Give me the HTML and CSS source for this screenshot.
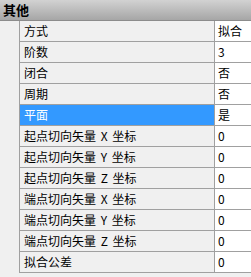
FILE: index.html
```html
<!DOCTYPE html>
<html lang="zh-CN">
  <head>
    <meta charset="UTF-8" />
    <title>其他</title>
    <link rel="stylesheet" href="styles.css">
  </head>
  <body>
    <div class="panel">
      <div class="header">其他</div>
      <div class="list">
        <div class="row"><div class="label">方式</div><div class="value">拟合</div></div>
        <div class="row"><div class="label">阶数</div><div class="value">3</div></div>
        <div class="row"><div class="label">闭合</div><div class="value">否</div></div>
        <div class="row"><div class="label">周期</div><div class="value">否</div></div>
        <div class="row selected"><div class="label">平面</div><div class="value">是</div></div>
        <div class="row"><div class="label">起点切向矢量 X 坐标</div><div class="value">0</div></div>
        <div class="row"><div class="label">起点切向矢量 Y 坐标</div><div class="value">0</div></div>
        <div class="row"><div class="label">起点切向矢量 Z 坐标</div><div class="value">0</div></div>
        <div class="row"><div class="label">端点切向矢量 X 坐标</div><div class="value">0</div></div>
        <div class="row"><div class="label">端点切向矢量 Y 坐标</div><div class="value">0</div></div>
        <div class="row"><div class="label">端点切向矢量 Z 坐标</div><div class="value">0</div></div>
        <div class="row"><div class="label">拟合公差</div><div class="value">0</div></div>
      </div>
    </div>
  </body>
</html>
```

FILE: styles.css
```css
* {
  margin: 0;
  padding: 0;
  box-sizing: border-box;
}

body {
  font-family: "Noto Sans CJK SC", "Liberation Sans", sans-serif;
  font-size: 12px;
  color: #000;
  background-color: #f0f0f0;
}

.panel {
  width: 251px;
  height: 277px;
}

.header {
  height: 21px;
  padding-left: 3px;
  line-height: 20px;
  font-size: 13px;
  font-weight: bold;
  background: linear-gradient(#d2d2d2, #a6a6a6);
  border-bottom: 1px solid #8c8c8c;
}

.list {
  margin-left: 19px;
  border-left: 1px solid #a0a0a0;
}

.row {
  display: flex;
  height: 21px;
  border-bottom: 1px solid #a0a0a0;
  line-height: 20px;
}

.label {
  flex: 1;
  padding-left: 4px;
  border-right: 1px solid #a0a0a0;
  white-space: nowrap;
  word-spacing: 2px;
  overflow: hidden;
}

.value {
  width: 36px;
  padding-left: 3px;
  background-color: #fff;
}

.selected .label {
  background-color: #3399ff;
  color: #fff;
}
```
